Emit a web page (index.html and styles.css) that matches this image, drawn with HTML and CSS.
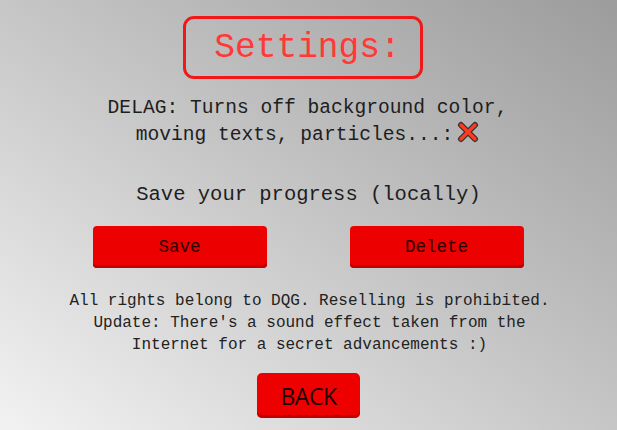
FILE: index.html
```html
<!DOCTYPE html>
<html lang="en">
<head>
    <meta charset="UTF-8">
    <meta name="viewport" content="width=device-width, initial-scale=1.0">
    <title>Settings</title>
    <link rel="stylesheet" href="styles.css">
</head>
<body>
    <div class="settings-page">
        <!-- Title -->
        <div class="title-box">Settings:</div>

        <!-- Delag option -->
        <div class="delag">
            DELAG: Turns off background color,<br>
            moving texts, particles...:<span class="delag-toggle"><svg width="22" height="22" viewBox="0 0 22 22"><path d="M4 4 L18 18 M18 4 L4 18" stroke="#333" stroke-width="6" stroke-linecap="round"/><path d="M4 4 L18 18 M18 4 L4 18" stroke="#ff3b1f" stroke-width="3.4" stroke-linecap="round"/></svg></span>
        </div>

        <!-- Save section -->
        <div class="save-title">Save your progress (locally)</div>
        <div class="save-buttons">
            <div class="btn">Save</div>
            <div class="btn">Delete</div>
        </div>

        <div class="notes">
            All rights belong to DQG. Reselling is prohibited.<br>
            Update: There's a sound effect taken from the<br>
            Internet for a secret advancements :)
        </div>

        <div class="back-button">BACK</div>
    </div>
</body>
</html>
```

FILE: styles.css
```css
* {
    margin: 0;
    padding: 0;
    box-sizing: border-box;
}

html, body {
    height: 100%;
}

body {
    background: linear-gradient(to top right, #f2f2f2 0%, #c6c6c6 50%, #9c9c9c 100%);
    font-family: "Liberation Mono", "DejaVu Sans Mono", monospace;
    color: #1e1e1e;
    overflow: hidden;
}

.settings-page {
    display: flex;
    flex-direction: column;
    align-items: center;
    padding-top: 16px;
}

/* Title */
.title-box {
    width: 240px;
    height: 63px;
    border: 3px solid #f01818;
    border-radius: 11px;
    color: #ff3838;
    font-size: 34.5px;
    display: flex;
    align-items: center;
    justify-content: center;
    padding-left: 10px;
    margin-right: 12px;
}

.delag {
    margin-top: 16px;
    text-align: center;
    font-size: 19.6px;
    line-height: 26px;
    margin-right: 2px;
}

.delag-toggle {
    display: inline-block;
    vertical-align: -3px;
    margin-left: 4px;
}

.save-title {
    margin-top: 31px;
    font-size: 20.5px;
    line-height: 26px;
}

.save-buttons {
    margin-top: 18px;
    display: flex;
    gap: 83px;
    margin-right: 1px;
}

.btn {
    width: 174px;
    height: 42px;
    background-color: #ec0000;
    border-radius: 4px;
    box-shadow: inset 0 -3px 0 #c00000;
    display: flex;
    align-items: center;
    justify-content: center;
    font-size: 17.5px;
    color: #2a0000;
}

.notes {
    margin-top: 22px;
    text-align: center;
    font-size: 16px;
    line-height: 22px;
    color: #222;
    margin-left: 2px;
}

.back-button {
    margin-top: 17px;
    width: 103px;
    height: 45px;
    background-color: #ee0000;
    border-radius: 5px;
    box-shadow: inset 0 -3px 0 #c00000;
    display: flex;
    align-items: center;
    justify-content: center;
    font-family: "Open Sans", "Noto Sans", sans-serif;
    font-size: 23px;
    color: #200000;
    letter-spacing: -0.5px;
}
```
